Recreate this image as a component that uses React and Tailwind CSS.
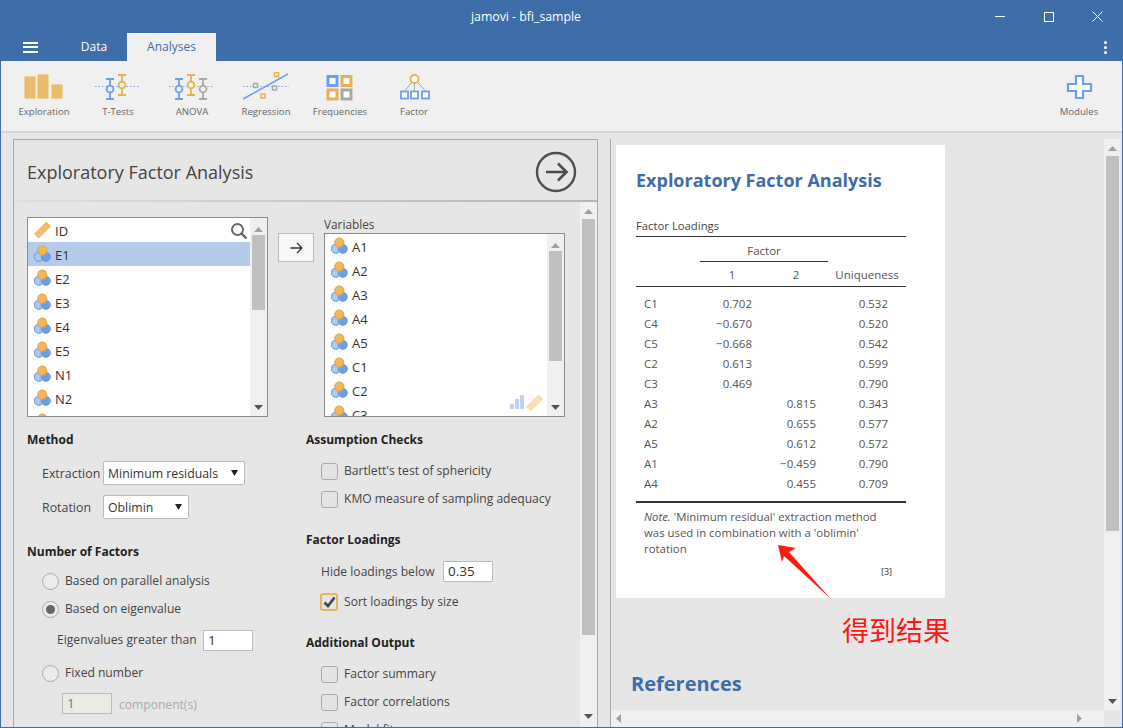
import React from "react";

const Var = () => (
  <svg width="17" height="18" viewBox="0 0 17 18" className="shrink-0">
    <circle cx="4.800" cy="11.800" r="4.500" fill="#a9c8f2" stroke="#5b93e6" strokeWidth="1" />
    <circle cx="11.800" cy="11.800" r="4.500" fill="#6d9fe8" stroke="#5b93e6" strokeWidth="1" />
    <circle cx="8.300" cy="5.600" r="4.600" fill="#efb65a" stroke="#e3a33e" strokeWidth="1" />
  </svg>
);

const Ruler = ({ faded }) => (
  <svg width="17" height="18" viewBox="0 0 18 18" className={faded ? "shrink-0 opacity-50" : "shrink-0"}>
    <path d="M1 13 L13 1 L17 5 L5 17 Z" fill="#f1c777" stroke="#eeb04a" strokeWidth="1.2" />
    <path d="M5 11l1.5 1.5M7.5 8.500l1.500 1.500M10 6l1.500 1.500M12.500 3.500l1.500 1.500" stroke="#e3a33e" strokeWidth="1" />
  </svg>
);

const Tri = ({ down, color = "#a0a0a0", w = 9, h = 5 }) => (
  <svg width={w} height={h} viewBox="0 0 9 5" preserveAspectRatio="none" className="shrink-0">
    <path d={down ? "M0 0H9L4.500 5Z" : "M0 5H9L4.500 0Z"} fill={color} />
  </svg>
);

const ScrollV = ({ top, gap, height, endPad, w = "w-[17px]", thumb = "w-[13px]", downColor = "#555555" }) => (
  <div className={`${w} shrink-0 h-full bg-[#f0f0f0] flex flex-col items-center`}>
    <div style={{ height: top }} className="shrink-0 flex items-end"><Tri /></div>
    <div style={{ height: height, marginTop: gap }} className={`${thumb} shrink-0 bg-[#bfbfbf]`} />
    <div className="flex-1" />
    <div style={{ paddingBottom: endPad }} className="shrink-0 flex"><Tri down color={downColor} /></div>
  </div>
);

const Row = ({ name, sel, icon }) => (
  <div className={`h-[24px] flex items-center pl-[6px] gap-[4px] shrink-0 text-[13px] text-[#333333] ${sel ? "bg-[#b4cbec]" : ""}`}>
    {icon || <Var />}
    <span className="pt-[3px]">{name}</span>
  </div>
);

const Select = ({ label, value, w, lw }) => (
  <div className="flex items-center pl-[15px] h-[24px]">
    <span className="text-[12.400px] text-[#444444] shrink-0 pt-[2px]" style={{ width: lw }}>{label}</span>
    <div className={`${w} h-[24px] bg-white border border-[#bbbbbb] rounded-[2px] flex items-center pl-[4px] text-[12.300px] text-[#333333] relative`}>
      <span className="pt-[2px]">{value}</span>
      <span className="absolute right-[6px] top-[8px]"><Tri down color="#222222" w={7} h={6} /></span>
    </div>
  </div>
);

const Radio = ({ label, on }) => (
  <div className="h-[24px] flex items-center pl-[15px] gap-[6px]">
    <div className="w-[17px] h-[17px] rounded-full border border-[#aaaaaa] bg-[#ebebeb] flex items-center justify-center shrink-0">
      {on && <div className="w-[9px] h-[9px] rounded-full bg-[#666666]" />}
    </div>
    <span className="text-[12.100px] text-[#444444]">{label}</span>
  </div>
);

const Check = ({ label, on }) => (
  <div className="h-[24px] flex items-center pl-[15px] gap-[6px]">
    {on ? (
      <div className="w-[18px] h-[18px] -ml-px rounded-[3px] border-2 border-[#e9b35c] bg-[#e4e4e4] flex items-center justify-center shrink-0">
        <svg width="13" height="12" viewBox="0 0 13 12"><path d="M1.500 6.500L5 10L11.500 1.500" fill="none" stroke="#444444" strokeWidth="2.600" /></svg>
      </div>
    ) : (
      <div className="w-[17px] h-[17px] rounded-[3px] border border-[#aaaaaa] bg-[#e4e4e4] shrink-0" />
    )}
    <span className="text-[12.100px] text-[#444444]">{label}</span>
  </div>
);

const Heading = ({ children, className = "" }) => (
  <div className={`h-[20px] pt-[2px] flex items-center text-[12px] font-bold text-[#222222] ${className}`}>{children}</div>
);

const Tool = ({ label, children, w = "w-[74px]" }) => (
  <div className={`${w} shrink-0 flex flex-col items-center pt-[11px]`}>
    <svg width="74" height="33" viewBox="0 0 74 33">{children}</svg>
    <div className="h-[14px] flex items-center justify-center text-[9.600px] text-[#666666] whitespace-nowrap">{label}</div>
  </div>
);

const Whisk = ({ x, top, c }) => (
  <g stroke={c} strokeWidth="1.800" fill="none">
    <path d={`M${x} ${top}V${top + 20}M${x - 4} ${top}H${x + 4}M${x - 4} ${top + 20}H${x + 4}`} />
    <circle cx={x} cy={top + 10} r="3.400" fill="#f0f0f0" />
  </g>
);

const Dotted = ({ x1, x2 }) => <path d={`M${x1} 14.500H${x2}`} stroke="#7fa6de" strokeWidth="1" strokeDasharray="1.500 2" />;

const Sq = ({ x, y, s, c, w = 1.500, fill = "#f0f0f0" }) => <rect x={x} y={y} width={s} height={s} fill={fill} stroke={c} strokeWidth={w} />;

const blue = "#6d9fe8";
const orange = "#e9b04f";
const gray = "#a8a8a8";

const rows = [
  ["C1", "0.702", "", "0.532"],
  ["C4", "\u22120.670", "", "0.520"],
  ["C5", "\u22120.668", "", "0.542"],
  ["C2", "0.613", "", "0.599"],
  ["C3", "0.469", "", "0.790"],
  ["A3", "", "0.815", "0.343"],
  ["A2", "", "0.655", "0.577"],
  ["A5", "", "0.612", "0.572"],
  ["A1", "", "\u22120.459", "0.790"],
  ["A4", "", "0.455", "0.709"],
];

export default function App() {
  return (
    <div className="w-[1123px] h-[728px] bg-[#3e6da9] flex flex-col overflow-hidden relative font-['Open_Sans','Noto_Sans_CJK_SC',sans-serif]">
      {/* title bar */}
      <div className="h-[33px] shrink-0 flex items-center text-white">
        <div className="flex-1 text-center text-[12.300px] pl-[77px] pt-[2px]">jamovi - bfi_sample</div>
        <div className="flex items-center w-[148px] shrink-0">
          <div className="w-[49px] flex justify-center"><div className="w-[10px] h-px bg-white" /></div>
          <div className="w-[49px] flex justify-center"><div className="w-[10px] h-[10px] border border-white" /></div>
          <div className="w-[49px] flex justify-center">
            <svg width="11" height="11" viewBox="0 0 11 11"><path d="M.5 .5L10.500 10.500M10.500 .5L.5 10.500" stroke="#ffffff" strokeWidth="1" /></svg>
          </div>
          <div className="w-px" />
        </div>
      </div>
      {/* tab bar */}
      <div className="h-[28px] shrink-0 flex items-stretch text-[12px] text-white">
        <div className="w-[61px] flex items-center pl-[23px]">
          <div className="w-[15px] flex flex-col gap-[2.500px]">
            <div className="h-[2px] bg-white" /><div className="h-[2px] bg-white" /><div className="h-[2px] bg-white" />
          </div>
        </div>
        <div className="w-[66px] flex items-center justify-center">Data</div>
        <div className="w-[89px] bg-[#f0f0f0] text-[#3e6da9] flex items-center justify-center">Analyses</div>
        <div className="flex-1" />
        <div className="w-[36px] flex flex-col items-center justify-center gap-[2px]">
          <div className="w-[3px] h-[3px] rounded-full bg-white" /><div className="w-[3px] h-[3px] rounded-full bg-white" /><div className="w-[3px] h-[3px] rounded-full bg-white" />
        </div>
      </div>
      {/* body */}
      <div className="flex-1 min-h-0 mx-px mb-px flex flex-col bg-[#e6e6e6]">
        {/* toolbar */}
        <div className="h-[72px] shrink-0 bg-[#f0f0f0] border-b-2 border-[#d4d4d4] flex pl-[6px]">
          <Tool label="Exploration">
            <rect x="18" y="5" width="10" height="21" fill="#e9bd6b" stroke="#eeb552" strokeWidth="1" />
            <rect x="31" y="3" width="10" height="23" fill="#e9bd6b" stroke="#eeb552" strokeWidth="1" />
            <rect x="45" y="13" width="10" height="13" fill="#e9bd6b" stroke="#eeb552" strokeWidth="1" />
          </Tool>
          <Tool label="T-Tests">
            <Dotted x1={14} x2={59} />
            <Whisk x={29} top={7} c={blue} />
            <Whisk x={41} top={3} c={orange} />
          </Tool>
          <Tool label="ANOVA">
            <Dotted x1={14} x2={59} />
            <Whisk x={24} top={7} c={blue} />
            <Whisk x={36} top={3} c={orange} />
            <Whisk x={48} top={7} c={gray} />
          </Tool>
          <Tool label="Regression">
            <Dotted x1={14} x2={60} />
            <path d="M14 27L59 2" stroke={blue} strokeWidth="1.500" />
            <Sq x={24.500} y={11.500} s={4} c={gray} />
            <Sq x={43.500} y={14} s={4} c={gray} />
            <Sq x={45.500} y={0.5} s={4} c={orange} />
            <Sq x={32} y={22} s={4} c={orange} />
          </Tool>
          <Tool label="Frequencies">
            <Sq x={25} y={4.500} s={9} c={blue} w={3} fill="#ffffff" />
            <Sq x={39} y={4.500} s={9} c={orange} w={3} fill="#ffffff" />
            <Sq x={25} y={18} s={9} c={orange} w={3} fill="#ffffff" />
            <Sq x={39} y={18} s={9} c={gray} w={3} fill="#ffffff" />
          </Tool>
          <Tool label="Factor">
            <path d="M37.500 7L27.500 19M37.500 7V19M37.500 7L48.500 19" stroke="#a8a8a8" strokeWidth="1" />
            <circle cx="37.500" cy="7" r="4" fill="#ffffff" stroke={orange} strokeWidth="1.800" />
            <Sq x={24} y={19.500} s={7} c={blue} w={1.800} fill="#ffffff" />
            <Sq x={34} y={19.500} s={7} c={blue} w={1.800} fill="#ffffff" />
            <Sq x={45} y={19.500} s={7} c={blue} w={1.800} fill="#ffffff" />
          </Tool>
          <div className="flex-1" />
          <Tool label="Modules">
            <path d="M34 4H41V12H49V19H41V26H34V19H26V12H34Z" fill="#ffffff" stroke={blue} strokeWidth="2.200" />
          </Tool>
          <div className="w-[6px] shrink-0" />
        </div>
        {/* main */}
        <div className="flex-1 min-h-0 flex pt-[6px] pl-[12px]">
          {/* left panel */}
          <div className="w-[585px] shrink-0 border border-b-0 border-[#a8a8a8] flex flex-col min-h-0">
            <div className="h-[60px] shrink-0 flex items-center pl-[13px] pr-[20px]">
              <div className="flex-1 text-[18px] text-[#444444] pt-[4px]">Exploratory Factor Analysis</div>
              <svg width="42" height="42" viewBox="0 0 42 42" className="mt-[4px]">
                <circle cx="21" cy="21" r="19" fill="none" stroke="#4d4d4d" strokeWidth="2.400" />
                <path d="M11 21H31M23 12.500L31.500 21L23 29.500" fill="none" stroke="#4d4d4d" strokeWidth="2.600" />
              </svg>
            </div>
            <div className="h-[2px] shrink-0 bg-linear-to-r from-[#e0e0e0] to-[#b4b4b4]" />
            <div className="flex-1 min-h-0 flex">
              <div className="flex-1 min-w-0 pl-[13px] pt-[15px] overflow-hidden">
                <div className="flex items-start">
                  <div className="w-[241px] h-[200px] shrink-0 bg-white border border-[#8c8c8c] flex overflow-hidden relative">
                    <div className="flex-1 min-w-0 flex flex-col overflow-hidden">
                      <Row name="ID" icon={<Ruler />} />
                      <Row name="E1" sel />
                      <Row name="E2" /><Row name="E3" /><Row name="E4" /><Row name="E5" /><Row name="N1" /><Row name="N2" /><Row name="N3" />
                    </div>
                    <ScrollV top={14} gap={3} height={75} endPad={6} />
                    <svg width="18" height="18" viewBox="0 0 18 18" className="absolute left-[202px] top-[4px]">
                      <circle cx="7.500" cy="7.500" r="5.500" fill="none" stroke="#666666" strokeWidth="2" />
                      <path d="M11.500 11.500L16.500 16.500" stroke="#666666" strokeWidth="2.400" />
                    </svg>
                  </div>
                  <div className="ml-[10px] mt-[16px] w-[36px] h-[29px] shrink-0 bg-[#f7f7f7] border border-[#bbbbbb] flex items-center justify-center">
                    <svg width="13" height="12" viewBox="0 0 13 12"><path d="M.5 6H12M7 1L12 6L7 11" fill="none" stroke="#333333" strokeWidth="1.300" /></svg>
                  </div>
                  <div className="ml-[10px] w-[241px] shrink-0">
                    <div className="h-[16px] flex items-center text-[11.800px] text-[#444444]">Variables</div>
                    <div className="h-[184px] bg-white border border-[#8c8c8c] flex overflow-hidden relative">
                      <div className="flex-1 min-w-0 flex flex-col overflow-hidden">
                        <Row name="A1" /><Row name="A2" /><Row name="A3" /><Row name="A4" /><Row name="A5" /><Row name="C1" /><Row name="C2" /><Row name="C3" />
                      </div>
                      <ScrollV top={14} gap={3} height={110} endPad={6} />
                      <div className="absolute left-[185px] top-[160px] flex items-end gap-[2px]">
                        <div className="flex items-end gap-px pb-[3px]">
                          <div className="w-[4px] h-[5px] bg-[#bdd2f0]" />
                          <div className="w-[4px] h-[10px] bg-[#bdd2f0]" />
                          <div className="w-[4px] h-[14px] bg-[#bdd2f0]" />
                        </div>
                        <Ruler faded />
                      </div>
                    </div>
                  </div>
                </div>
                <div className="flex mt-[12px]">
                  <div className="w-[279px] shrink-0">
                    <Heading>Method</Heading>
                    <div className="mt-[12px]"><Select label="Extraction" value="Minimum residuals" w="w-[142px]" lw="61px" /></div>
                    <div className="mt-[10px]"><Select label="Rotation" value="Oblimin" w="w-[86px]" lw="61px" /></div>
                    <Heading className="mt-[22px]">Number of Factors</Heading>
                    <div className="mt-[8px]"><Radio label="Based on parallel analysis" /></div>
                    <div className="mt-[4px]"><Radio label="Based on eigenvalue" on /></div>
                    <div className="mt-[9px] h-[21px] flex items-center pl-[30px]">
                      <span className="w-[146px] shrink-0 text-[12.100px] text-[#444444]">Eigenvalues greater than</span>
                      <div className="w-[50px] h-[21px] bg-white border border-[#bbbbbb] flex items-center pl-[4px] text-[13.500px] text-[#333333]">1</div>
                    </div>
                    <div className="mt-[10px]"><Radio label="Fixed number" /></div>
                    <div className="mt-[8px] h-[21px] flex items-center pl-[35px] gap-[7px]">
                      <div className="w-[50px] h-[21px] bg-[#ebebe4] border border-[#bbbbbb] flex items-center pl-[4px] text-[13.500px] text-[#777777]">1</div>
                      <span className="text-[12.100px] text-[#aaaaaa] pt-[3px]">component(s)</span>
                    </div>
                  </div>
                  <div className="flex-1 min-w-0">
                    <Heading>Assumption Checks</Heading>
                    <div className="mt-[10px]"><Check label="Bartlett's test of sphericity" /></div>
                    <div className="mt-[4px]"><Check label="KMO measure of sampling adequacy" /></div>
                    <Heading className="mt-[18px]">Factor Loadings</Heading>
                    <div className="mt-[12px] h-[20px] flex items-center pl-[15px]">
                      <span className="w-[122px] shrink-0 text-[12.100px] text-[#444444] pt-[3px]">Hide loadings below</span>
                      <div className="w-[50px] h-[21px] bg-white border border-[#bbbbbb] flex items-center pl-[4px] text-[13.500px] text-[#333333]">0.35</div>
                    </div>
                    <div className="mt-[9px]"><Check label="Sort loadings by size" on /></div>
                    <Heading className="mt-[18px]">Additional Output</Heading>
                    <div className="mt-[10px]"><Check label="Factor summary" /></div>
                    <div className="mt-[4px]"><Check label="Factor correlations" /></div>
                    <div className="mt-[4px]"><Check label="Model fit" /></div>
                  </div>
                </div>
              </div>
              <ScrollV top={12} gap={5} height={416} endPad={8} />
            </div>
          </div>
          {/* right panel */}
          <div className="ml-[12px] w-[510px] shrink-0 border-l border-[#a8a8a8] flex flex-col min-h-0">
            <div className="flex-1 min-h-0 flex">
              <div className="flex-1 min-w-0 overflow-hidden pl-[5px] pt-[6px]">
                <div className="w-[329px] h-[453px] bg-white pl-[20px] pt-[21px] flex flex-col">
                  <div className="h-[28px] flex items-center text-[18px] font-bold text-[#3e6da9]">Exploratory Factor Analysis</div>
                  <div className="mt-[23px] w-[270px] h-[20px] flex items-center text-[11.300px] text-[#444444] border-b border-[#333333]">Factor Loadings</div>
                  <div className="w-[270px] text-[11.500px] text-[#555555]">
                    <div className="grid grid-cols-[64px_128px_78px] h-[25px]">
                      <div />
                      <div className="flex items-center justify-center border-b border-[#333333] pt-[3px]">Factor</div>
                      <div />
                    </div>
                    <div className="grid grid-cols-[64px_64px_64px_78px] h-[25px] border-b border-[#333333] items-center text-center pt-[1px]">
                      <div /><div>1</div><div>2</div><div>Uniqueness</div>
                    </div>
                    <div className="pt-[7px] pb-[7px] border-b-2 border-[#333333]">
                      {rows.map((r) => (
                        <div key={r[0]} className="grid grid-cols-[64px_64px_64px_78px] h-[20px] items-center text-right">
                          <div className="text-left pl-[8px]">{r[0]}</div>
                          <div className="pr-[12px]">{r[1]}</div>
                          <div className="pr-[12px]">{r[2]}</div>
                          <div className="pr-[18px]">{r[3]}</div>
                        </div>
                      ))}
                    </div>
                    <div className="pl-[8px] pt-[6px] w-[248px] text-[11.400px] leading-[16px]">
                      <i>Note.</i> 'Minimum residual' extraction method was used in combination with a 'oblimin' rotation
                    </div>
                    <div className="mt-[9px] pr-[14px] h-[12px] flex items-center justify-end text-[9px] text-[#333333]">[3]</div>
                  </div>
                </div>
                <div className="mt-[72px] ml-[15px] h-[28px] flex items-center text-[20px] font-bold text-[#3e6da9]">References</div>
              </div>
              <ScrollV w="w-[16px]" thumb="w-[13px]" top={12} gap={5} height={375} endPad={6} />
            </div>
            <div className="h-[17px] shrink-0 bg-[#f0f0f0] flex items-center pl-[5px]">
              <svg width="5" height="9" viewBox="0 0 5 9"><path d="M5 0V9L0 4.500Z" fill="#a0a0a0" /></svg>
              <div className="flex-1" />
              <svg width="5" height="9" viewBox="0 0 5 9" className="mr-[22px]"><path d="M0 0V9L5 4.500Z" fill="#a0a0a0" /></svg>
              <div className="w-[16px] h-full bg-[#e6e6e6]" />
            </div>
          </div>
        </div>
      </div>
      {/* annotation overlay */}
      <svg width="60" height="60" viewBox="0 0 60 60" className="absolute left-[775px] top-[542px]">
        <polygon points="3,3 21,6 14,10 56,57 9,14 7,20" fill="#ff1a0d" />
      </svg>
      <div className="absolute left-[842px] top-[612px] text-[27px] leading-[36px] text-[#ff1515] font-['Noto_Sans_CJK_SC',sans-serif]">得到结果</div>
    </div>
  );
}
